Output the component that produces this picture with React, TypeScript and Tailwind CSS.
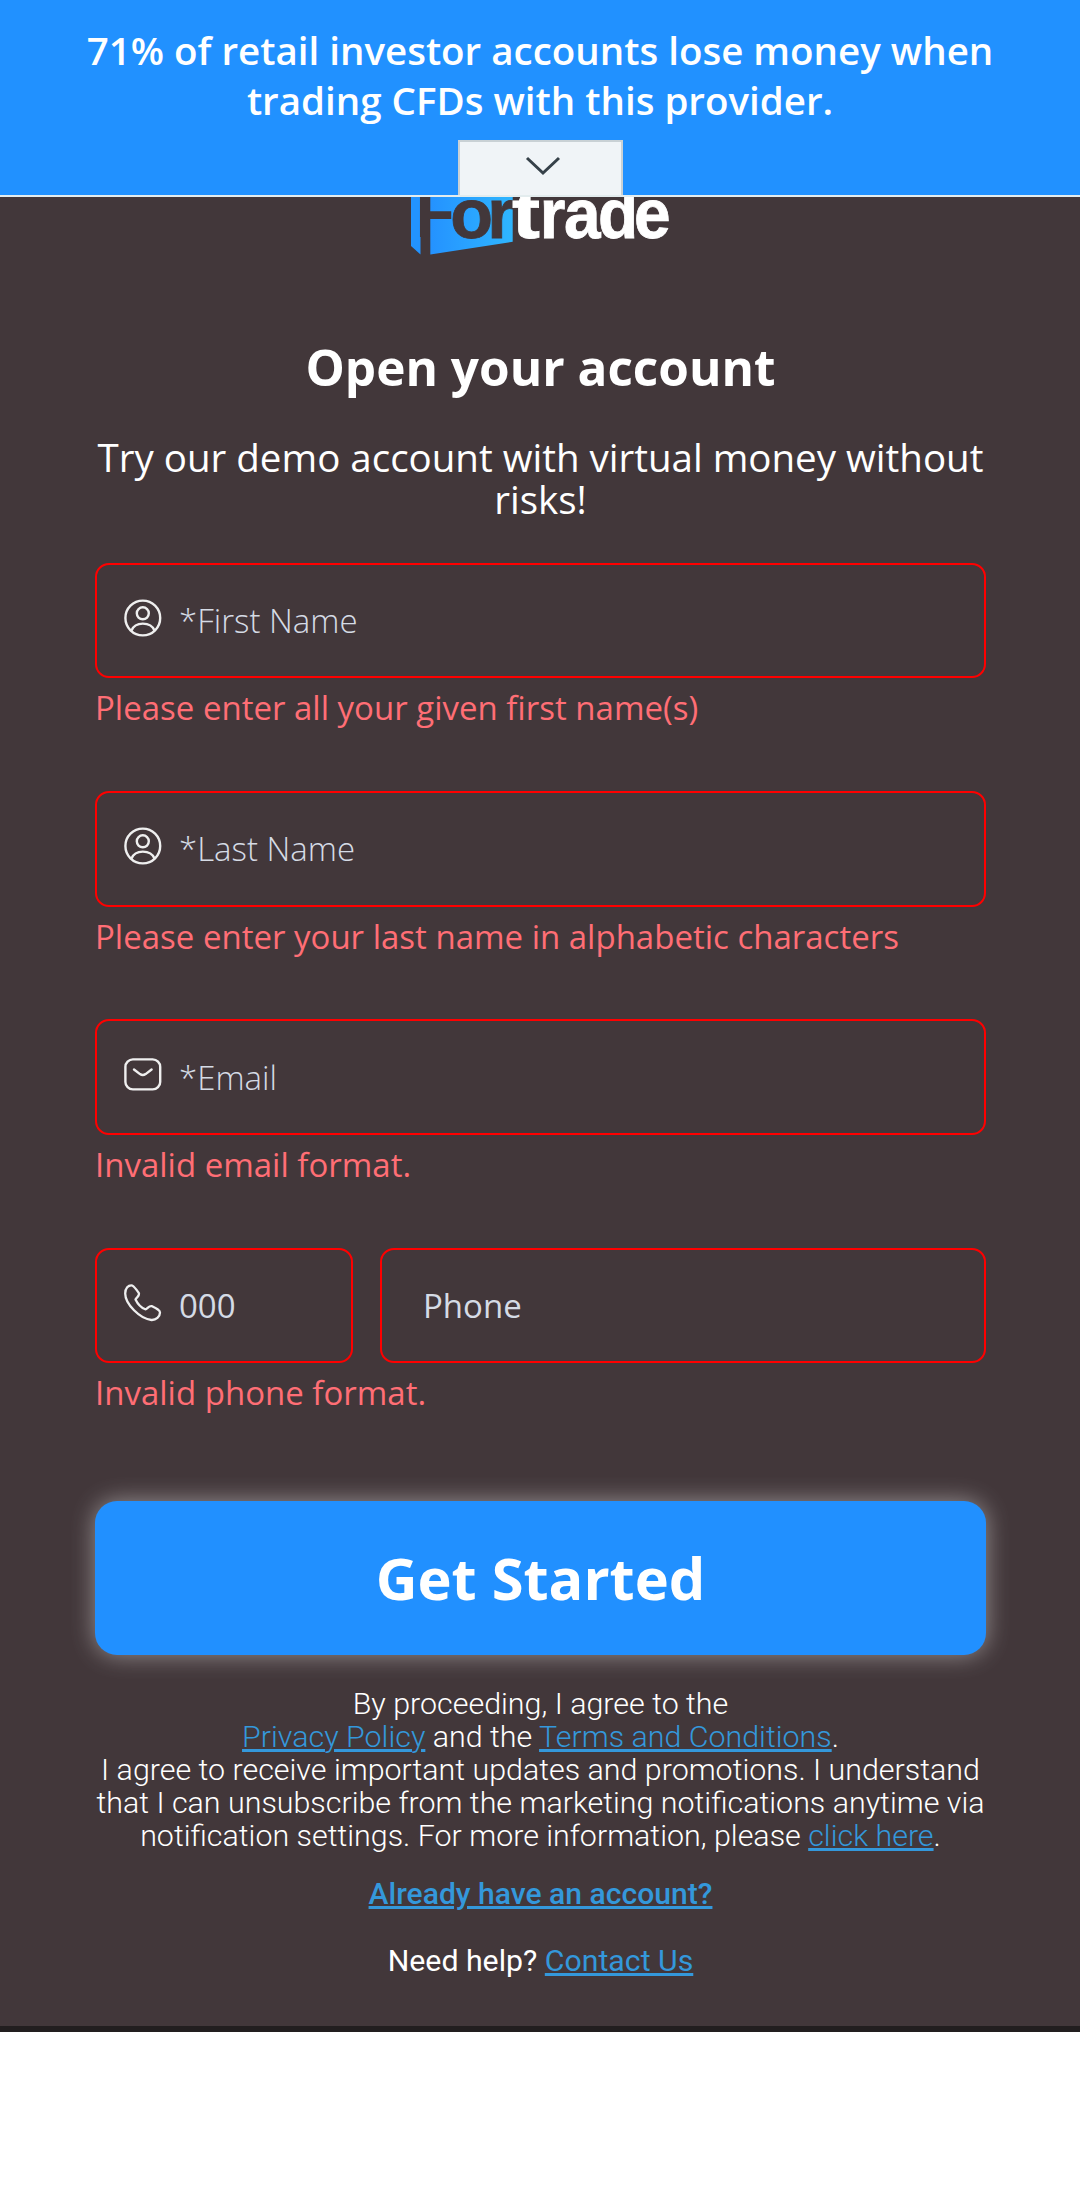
import type { ReactNode } from "react";

function UserIcon() {
  return (
    <svg className="h-[38px] w-[38px] shrink-0" viewBox="0 0 38 38" fill="none" stroke="#efefef" strokeWidth="2.4">
      <circle cx="18.8" cy="19" r="17.4" />
      <circle cx="18.8" cy="14.3" r="6" />
      <path d="M7.5 31.5C9.5 26.5 13.5 24.6 18.8 24.6S28.5 26.5 30.5 31.5" />
    </svg>
  );
}

function MailIcon() {
  return (
    <svg className="h-[38px] w-[38px] shrink-0" viewBox="0 0 38 38" fill="none" stroke="#efefef" strokeWidth="2.4" strokeLinecap="round">
      <rect x="1.4" y="3.4" width="34.8" height="30" rx="7.5" />
      <path d="M10 13.5L16 18.1Q18.8 20.1 21.6 18.1L27.6 13.5" />
    </svg>
  );
}

function PhoneIcon() {
  return (
    <svg className="h-[38px] w-[38px] shrink-0" viewBox="0 0 38 38" fill="none" stroke="#efefef" strokeWidth="2.3" strokeLinejoin="round">
      <path d="M1.2 9.5C1.2 4 4.5 1.3 7.3 1.3C9.8 1.3 11 4 14.8 9C16 11.2 13.2 13 11.5 15.4C13.5 19.5 17 23.5 21.3 25.3C23.5 24.8 25 21.2 28 22.2C32.5 24.4 36 26 36 28.6C36 32.8 32 36.2 27.5 36C16 35 1.2 20 1.2 9.5Z" />
    </svg>
  );
}

function Logo() {
  return (
    <svg className="mx-auto block h-[63px] w-[260px]" viewBox="0 0 260 63" fontFamily="'Liberation Sans', Arial, sans-serif" fontWeight="700" fontSize="70">
      <defs>
        <linearGradient id="panel" x1="0" x2="1" y1="0" y2="0">
          <stop offset="0" stopColor="#2492ff" />
          <stop offset="1" stopColor="#2fb6ff" />
        </linearGradient>
      </defs>
      <path d="M1 0H10.5V57.6L1 49Z" fill="#2293ff" />
      <path d="M20.3 0H102.7V44.8L20.3 57.6Z" fill="url(#panel)" />
      <g fill="#42373a">
        <text x="6.5" y="39.5" transform="scale(0.9 1)">F</text>
        <text x="40.3 77.3" y="41" stroke="#42373a" strokeWidth="0.8">or</text>
      </g>
      <g fill="#fff" stroke="#fff" strokeWidth="0.8">
        <text x="102" y="41" textLength="28" lengthAdjust="spacingAndGlyphs">t</text>
        <text x="138.1 163.8 199.9 238.4" y="41" transform="scale(0.94 1)">rade</text>
      </g>
    </svg>
  );
}

function Field({ icon, error, children }: { icon: ReactNode; error: string; children: ReactNode }) {
  return (
    <div className="h-[228.2px]">
      <div className="flex h-[115.4px] items-center rounded-[14px] border-2 border-[#ff0000] pl-[27px] text-[33px]">
        <span className="-mt-[5px]">{icon}</span>
        <span className="ml-[17px] mt-[0.6px] font-light text-[#d5dbe5]">{children}</span>
      </div>
      <p className="mt-[8px] text-[33px] leading-[44px] text-[#ff6e75]">{error}</p>
    </div>
  );
}

const link = "text-[#3498db] underline";

export default function App() {
  return (
    <div className="min-h-[2186px] w-full bg-white font-['Open_Sans',sans-serif]">
      <header className="flex h-[197px] flex-col items-center border-b-2 border-[#e3ecee] bg-[#2191ff] pt-[25px]">
        <p className="text-center text-[38.5px] font-semibold leading-[50px] text-white">
          71% of retail investor accounts lose money when
          <br />
          trading CFDs with this provider.
        </p>
        <button className="ml-px mt-[15px] flex h-[55px] w-[165px] justify-center border-2 border-b-0 border-[#c9d1d5] bg-[#f0f4f7] pt-[14px]">
          <svg className="ml-[4px] h-[22px] w-[36px]" viewBox="0 0 36 22" fill="none" stroke="#364149" strokeWidth="3">
            <path d="M2 2L18 17L34 2" />
          </svg>
        </button>
      </header>
      <main className="h-[1835px] border-b-[6px] border-[#221e1f] bg-[#42373a] text-white">
        <Logo />
        <div className="ml-[95px] w-[891px]">
          <h1 className="pt-[77px] text-center text-[49.5px] font-bold leading-[60px]">Open your account</h1>
          <p className="mt-[39px] text-center text-[38.5px] leading-[42px]">
            Try our demo account with virtual money without risks!
          </p>
          <form className="mt-[43px]">
            <Field icon={<UserIcon />} error="Please enter all your given first name(s)">*First Name</Field>
            <Field icon={<UserIcon />} error="Please enter your last name in alphabetic characters">*Last Name</Field>
            <Field icon={<MailIcon />} error="Invalid email format.">*Email</Field>
            <div className="flex gap-[27px] text-[33px] text-[#d5dbe5]">
              <div className="flex h-[115.4px] w-[258px] items-center rounded-[14px] border-2 border-[#ff0000] pl-[27px]">
                <span className="-mt-[5px]"><PhoneIcon /></span>
                <span className="ml-[17px]">000</span>
              </div>
              <div className="flex h-[115.4px] flex-1 items-center rounded-[14px] border-2 border-[#ff0000] pl-[41px]">Phone</div>
            </div>
            <p className="mt-[7.6px] text-[33px] leading-[44px] text-[#ff6e75]">Invalid phone format.</p>
            <button
              type="button"
              className="mt-[86.4px] h-[154px] w-full rounded-[22px] bg-[#2190ff] text-[57.75px] font-bold leading-[80px] shadow-[0_0_25px_rgba(255,255,255,0.45)]"
            >
              Get Started
            </button>
          </form>
          <div className="mt-[32px] whitespace-nowrap text-center font-[Roboto,sans-serif] text-[30.25px] leading-[33px]">
            <p className="text-[30.4px] font-light">
              By proceeding, I agree to the
              <br />
              <a className={link}>Privacy Policy</a> and the <a className={link}>Terms and Conditions</a>.
              <br />
              I agree to receive important updates and promotions. I understand
              <br />
              that I can unsubscribe from the marketing notifications anytime via
              <br />
              notification settings. For more information, please <a className={link}>click here</a>.
            </p>
            <p className="mt-[25px] text-[30.1px] font-medium"><a className={link}>Already have an account?</a></p>
            <p className="mt-[34px]">Need help? <a className={link}>Contact Us</a></p>
          </div>
        </div>
      </main>
    </div>
  );
}
